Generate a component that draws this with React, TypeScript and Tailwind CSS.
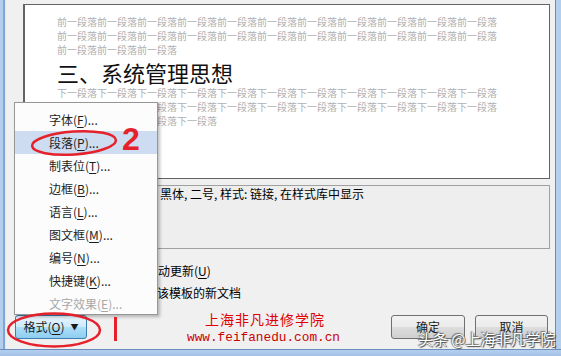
const before = '前一段落'
const after = '下一段落'

const menu: { label: string; key: string; disabled?: boolean; active?: boolean }[] = [
  { label: '字体', key: 'F' },
  { label: '段落', key: 'P', active: true },
  { label: '制表位', key: 'T' },
  { label: '边框', key: 'B' },
  { label: '语言', key: 'L' },
  { label: '图文框', key: 'M' },
  { label: '编号', key: 'N' },
  { label: '快捷键', key: 'K' },
  { label: '文字效果', key: 'E', disabled: true },
]

function Btn({ children, className = '' }: { children: React.ReactNode; className?: string }) {
  return (
    <div
      className={`h-[24px] flex items-center justify-center rounded-[3px] border border-[#707070] bg-[linear-gradient(to_bottom,#f2f2f2_0%,#ebebeb_50%,#dddddd_50%,#cfcfcf_100%)] text-[12px] text-[#1a1a1a] ${className}`}
    >
      {children}
    </div>
  )
}

export default function App() {
  return (
    <div className="relative w-[561px] h-[356px] overflow-hidden flex flex-col bg-[#a9c6ec] font-['Noto_Sans_CJK_SC','Noto_Sans',sans-serif] text-[12px] text-black">
      <div className="flex flex-1">
        <div className="w-[6px] bg-[linear-gradient(to_right,#b4cfee_0px,#b4cfee_3px,#7fa6d6_3px,#7fa6d6_5px,#dfe8f3_5px)]" />

        <div className="relative flex-1 flex flex-col bg-[#f0f0f0] pt-[4px] pl-[9px]">
          {/* preview */}
          <div className="ml-[8px] mr-[5px] h-[175px] border border-[#646464] border-l-2 bg-white pl-[32px] pt-[10px] overflow-hidden">
            <div className="text-[10px] leading-[14px] text-[#b0b0b0] whitespace-nowrap">
              <div>{before.repeat(11)}</div>
              <div>{before.repeat(11)}</div>
              <div>{before.repeat(3)}</div>
            </div>
            <div className="mt-[1px] text-[22px] leading-[28px] text-[#111] whitespace-nowrap">三、系统管理思想</div>
            <div className="text-[10px] leading-[14px] text-[#b0b0b0] whitespace-nowrap">
              <div>{after.repeat(11)}</div>
              <div>{after.repeat(11)}</div>
              <div>{after.repeat(4)}</div>
            </div>
          </div>

          {/* description */}
          <div className="ml-[8px] mr-[5px] mt-[6px] h-[64px] border border-[#a0a0a0] bg-[#eeeeee] pl-[136px] text-[12px] leading-[16px] whitespace-nowrap">
            黑体, 二号, 样式: 链接, 在样式库中显示
          </div>

          {/* options */}
          <div className="ml-[8px] mt-[12px] h-[20px] flex items-center whitespace-nowrap">
            <div className="w-[107px] flex items-center gap-[3px]">
              <span className="w-[13px] h-[13px] border border-[#8e8f8f] bg-white" />
              <span>添加到样式库(S)</span>
            </div>
            <span className="w-[13px] h-[13px] border border-[#8e8f8f] bg-white" />
            <span className="ml-[3px]">
              自动更新(<span className="underline underline-offset-2">U</span>)
            </span>
          </div>
          <div className="ml-[8px] mt-[2px] h-[20px] flex items-center whitespace-nowrap">
            <div className="w-[95px] flex items-center gap-[3px]">
              <span className="w-[13px] h-[13px] rounded-full border border-[#8e8f8f] bg-white" />
              <span>仅限此文档(D)</span>
            </div>
            <span className="w-[13px] h-[13px] rounded-full border border-[#8e8f8f] bg-white" />
            <span className="ml-[2px]">基于该模板的新文档</span>
          </div>

          {/* buttons */}
          <div className="mt-[12px] mr-[7px] flex items-center">
            <div className="w-[72px] h-[24px] flex items-center justify-center gap-[6px] rounded-[3px] border border-[#3c7fb1] bg-[linear-gradient(to_bottom,#e8f5fd_0%,#cfeafa_50%,#ade0f8_50%,#8fcdf0_100%)] text-[12px] text-[#1a1a1a]">
              <span>
                格式(<span className="underline underline-offset-2">O</span>)
              </span>
              <span className="text-[8px] leading-none">▼</span>
            </div>
            <Btn className="ml-auto w-[74px]">确定</Btn>
            <Btn className="ml-[10px] w-[73px]">取消</Btn>
          </div>

          {/* context menu */}
          <div className="absolute left-[8px] top-[102px] w-[144px] h-[213px] border border-[#979797] bg-[#fcfcfc] pt-[5px] shadow-[2px_2px_3px_rgba(0,0,0,0.25)]">
            {menu.map((m) => (
              <div
                key={m.key}
                className={`h-[23px] flex items-center pl-[34px] whitespace-nowrap ${m.active ? 'bg-[#cddcf0]' : ''} ${m.disabled ? 'text-[#a8a8a8]' : 'text-[#1e1e1e]'}`}
              >
                {m.label}(<span className="underline underline-offset-2">{m.key}</span>)...
              </div>
            ))}
          </div>
        </div>

        <div className="w-[6px] bg-[linear-gradient(to_right,#6b8cb8_0px,#6b8cb8_1px,#b4cfee_1px)]" />
      </div>
      <div className="h-[7px] bg-[linear-gradient(to_bottom,#6b8cb8_0px,#6b8cb8_1px,#b4cfee_1px,#a4c2e8_7px)]" />

      {/* annotations */}
      <svg className="absolute inset-0 pointer-events-none" width="561" height="356">
        <ellipse cx="74" cy="143" rx="42" ry="11.5" transform="rotate(-4 74 143)" fill="none" stroke="#e5222b" strokeWidth="2.5" />
        <ellipse cx="54" cy="330" rx="46" ry="16.5" fill="none" stroke="#e5222b" strokeWidth="2.5" />
        <rect x="114" y="317" width="3" height="24" fill="#e5222b" />
      </svg>
      <div className="absolute left-[122px] top-[123px] text-[32px] leading-none font-bold text-[#e5222b] font-['Liberation_Sans',sans-serif]">2</div>

      <div className="absolute left-[205px] top-[312px] text-[14px] leading-none tracking-[1px] text-[#e00000] whitespace-nowrap">上海非凡进修学院</div>
      <div className="absolute left-[187px] top-[332px] text-[12.75px] leading-none text-[#cc0000] font-['Liberation_Mono',monospace] whitespace-nowrap">www.feifanedu.com.cn</div>

      <div className="absolute left-[418px] top-[331px] text-[15px] leading-none text-white whitespace-nowrap [text-shadow:0_0_1px_#555,1px_1px_1px_#444,-1px_-1px_1px_#777]">
        头条 @上海非凡学院
      </div>
    </div>
  )
}
